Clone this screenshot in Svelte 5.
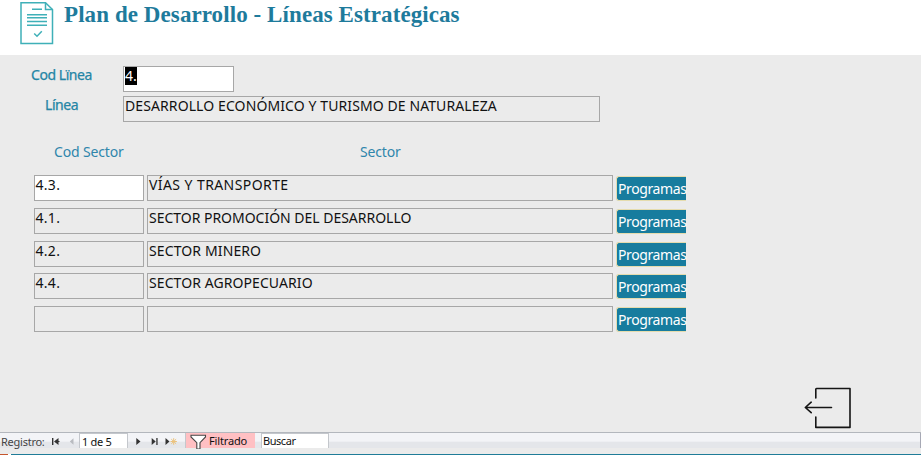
<script>
  const sectors = [
    { code: '4.3.', name: 'VÍAS Y TRANSPORTE', current: true, spacing: 0.42 },
    { code: '4.1.', name: 'SECTOR PROMOCIÓN DEL DESARROLLO', spacing: -0.02 },
    { code: '4.2.', name: 'SECTOR MINERO', spacing: 0.12 },
    { code: '4.4.', name: 'SECTOR AGROPECUARIO', spacing: 0.08 },
    { code: '', name: '', spacing: 0 }
  ];
</script>

<div class="window">
  <header>
    <svg class="doc" width="36" height="45" viewBox="0 0 36 45" fill="none" stroke="#3fb0b8" stroke-width="1.5">
      <path d="M1 2.7H25.5L32.5 9.5V43.4H1Z" />
      <path d="M25.5 2.7V9.5H32.5" />
      <path d="M12 9.3H22M7 14.8H27M7 17.8H27M7 21.5H27M7 25.2H27" />
      <path d="M14.2 33.5L17 36.2L21.8 31.2" />
    </svg>
    <h1>Plan de Desarrollo - Líneas Estratégicas</h1>
  </header>

  <main>
    <div class="field first">
      <label for="cod">Cod Lïnea</label>
      <div class="box code white" id="cod"><span class="selected">4.</span></div>
    </div>
    <div class="field second">
      <label for="linea">Línea</label>
      <div class="box line" id="linea"><span class="linename">DESARROLLO ECONÓMICO Y TURISMO DE NATURALEZA</span></div>
    </div>

    <div class="heads"><span class="code-head">Cod Sector</span><span class="sector-head">Sector</span></div>

    <div class="rows">
      {#each sectors as s}
        <div class="row">
          <div class="box code" class:white={s.current}>{s.code}</div>
          <div class="box name" style="letter-spacing: {s.spacing}px">{s.name}</div>
          <button>Programas</button>
        </div>
      {/each}
    </div>

    <div class="exit">
      <svg width="48" height="42" viewBox="0 0 48 42" fill="none" stroke="#151515" stroke-width="1.6" stroke-linecap="round" stroke-linejoin="round">
        <path d="M11.8 11V2.2Q11.8 1.5 12.5 1.5H46V40.4H11.8V30" />
        <path d="M27.5 20.5H1.5M7.2 15.2L1.3 20.5L7.2 25.7" />
      </svg>
    </div>
  </main>

  <footer>
    <div class="nav">
      <span class="reg">Registro:</span>
      <svg class="prev" width="30" height="15" viewBox="0 0 30 15">
        <path d="M3 5h1.4v7h-1.4zM9.5 5v7L5 8.5zM8.5 8h2v1h-2z" fill="#333" />
        <path d="M24.5 5.2v6.6L20.8 8.5z" fill="#b9bbc0" />
      </svg>
      <span class="pos">1 de 5</span>
      <svg class="next" width="57" height="15" viewBox="0 0 57 15">
        <path d="M8.3 5v7l4.2-3.5zM23.7 5v7l4-3.5zM28.3 5h1.3v7h-1.3zM37.5 5v7l4-3.5z" fill="#333" />
        <path d="M45.7 5.2v6.6M42.5 8.5h6.4M43.3 6.2l4.8 4.6M48.1 6.2l-4.8 4.6" stroke="#ebc27c" stroke-width="1" />
      </svg>
      <span class="filter">
        <svg width="17" height="15" viewBox="0 0 17 15"><path d="M1 1.2H15.5V3L10 8.7V15H6.8V8.7L1 3Z" fill="#fff" stroke="#444" stroke-width="1.1" /></svg>
        <span>Filtrado</span>
      </span>
      <span class="search">Buscar</span>
      <span class="scroll"></span>
    </div>
    <div class="edge"></div>
  </footer>
</div>

<style>
  :global(body) { margin: 0; background: #ebebeb; }
  .window {
    width: 921px; height: 455px; overflow: hidden; display: flex; flex-direction: column;
    background: #ebebeb; font: 14px/17px "Noto Sans", sans-serif; color: #111; white-space: nowrap;
  }
  header { height: 55px; flex: none; background: #fff; display: flex; box-sizing: border-box; padding-left: 20px; }
  .doc { flex: none; margin-right: 8px; }
  h1 { margin: 1px 0 0; font: bold 23px/28px "Liberation Serif", serif; color: #1e7b9c; letter-spacing: 0.08px; }
  main { flex: 1; display: flex; flex-direction: column; min-height: 0; }
  .field { display: flex; height: 26px; }
  .first { margin-top: 11px; padding-left: 31px; }
  .second { margin-top: 4px; padding-left: 45px; }
  label { color: #2385a5; box-sizing: border-box; -webkit-text-stroke: 0.25px #2385a5; letter-spacing: -0.45px; }
  .first label { width: 92px; }
  .second label { width: 78px; }
  .box { box-sizing: border-box; height: 26px; border: 1px solid #a7a7a7; padding: 0 1px; }
  .code { width: 111px; letter-spacing: 0.3px; }
  .line { width: 477px; }
  .linename { letter-spacing: 0.1px; }
  .white { background: #fff; }
  .selected { display: inline-block; background: #000; color: #fff; height: 18px; line-height: 18px; letter-spacing: 0; }
  .heads { display: flex; margin-top: 21px; padding-left: 54px; color: #2f86ab; height: 17px; letter-spacing: -0.15px; }
  .code-head { width: 306px; }
  .rows { margin-top: 15px; padding-left: 34px; display: flex; flex-direction: column; gap: 6.8px; }
  .row { display: flex; height: 26px; }
  .row .code { width: 110px; padding-left: 0.5px; }
  .name { width: 466px; margin: 0 3px; }
  button {
    width: 70px; height: 25px; margin: 1px 0 0; padding: 1px 0 0 1px; text-align: left;
    background: #177c9e; color: #fff; border: 1px solid #e5dcae; border-right: 0; border-radius: 3px 0 0 3px;
    font: 14px/20px "Noto Sans", sans-serif; letter-spacing: -0.4px; white-space: nowrap;
  }
  .exit { margin: 55px 0 0 804px; height: 42px; }
  .exit svg { display: block; }
  footer { height: 23px; flex: none; display: flex; flex-direction: column; justify-content: space-between; }
  .nav {
    height: 16px; display: flex; font-size: 11px; line-height: 15px; letter-spacing: -0.1px; box-sizing: border-box;
    border-top: 1px solid #b3b7bd; background: linear-gradient(#f3f4f7 0 55%, #e4e6ea 60%); color: #111;
  }
  .reg { width: 45px; padding-left: 1px; color: #444; letter-spacing: -0.25px; padding-top: 1px; }
  .prev, .next { flex: none; }
  .prev { margin-left: 3px; }
  .pos { box-sizing: border-box; width: 49px; border: 1px solid #c4c7cc; border-bottom: 0; background: #fff; padding-left: 2px; letter-spacing: -0.3px; }
  .filter { box-sizing: border-box; width: 70px; background: #ffc0c3; border-left: 1px solid #c4c7cc; padding-left: 4px; display: flex; gap: 2px; padding-top: 1px; }
  .filter span { letter-spacing: -0.15px; line-height: 14px; }
  .search { box-sizing: border-box; margin-left: 6px; width: 68px; border: 1px solid #c4c7cc; border-bottom: 0; background: #fff; padding-left: 1px; line-height: 14px; letter-spacing: -0.45px; }
  .scroll { flex: 1; border-right: 1px solid #a7a9b5; }
  .edge { height: 1px; background: linear-gradient(90deg, #c5552d 0 8px, #fff 8px 11px, #1f7c98 11px); }
</style>
